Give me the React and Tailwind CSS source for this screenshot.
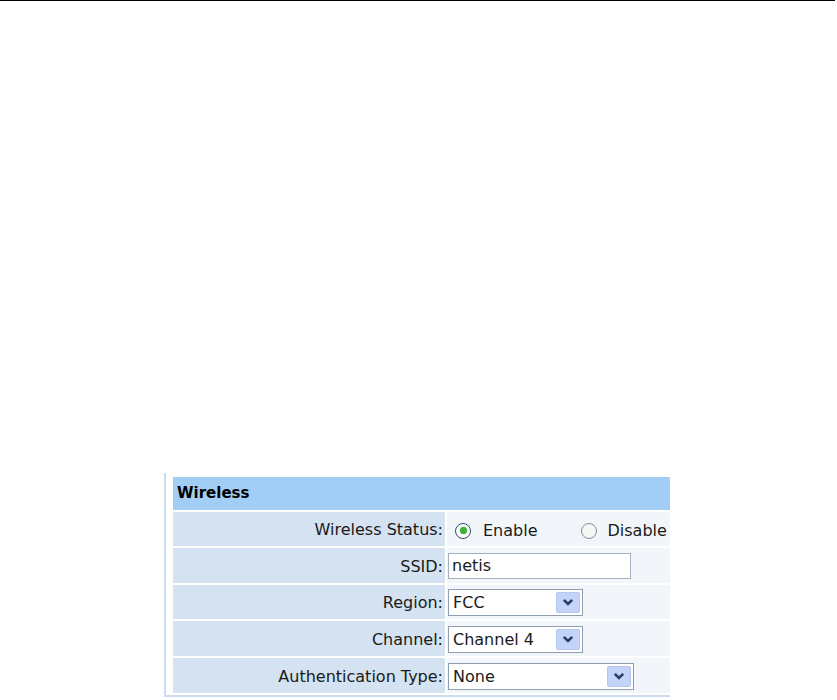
import React from "react";

function Radio({ checked }) {
  return (
    <span
      className={
        "relative inline-flex items-center justify-center w-[16px] h-[16px] rounded-full border " +
        (checked ? "border-[#2f4a68] bg-white" : "border-[#7f8f9f] bg-[#f6f6f2]")
      }
    >
      {checked ? <span className="w-[7px] h-[7px] rounded-full bg-[#3fae3a] shadow-[0_0_2px_#8fd68a]" /> : null}
    </span>
  );
}

function Chevron() {
  return (
    <svg width="12" height="9" viewBox="0 0 12 9">
      <path d="M1.8 1.8 L6 6 L10.2 1.8" fill="none" stroke="#283c6a" strokeWidth="2.6" />
    </svg>
  );
}

function Select({ value, w }) {
  return (
    <div className={"flex items-center h-[27px] border border-[#8f9fae] bg-white pl-[4px] pr-[2px] " + w}>
      <span className="flex-1 pt-[1px]">{value}</span>
      <span className="flex items-center justify-center w-[24px] h-[21px] rounded-[2px] bg-[#c3d4f8] border border-[#b3c6ee]">
        <Chevron />
      </span>
    </div>
  );
}

function Row({ label, h, children }) {
  return (
    <>
      <div className={"bg-[#d4e2f1] flex items-center justify-end pr-[2px] pt-[2px] " + h}>{label}</div>
      <div className={"bg-[#f2f5f9] flex items-center pt-[1px] " + h}>{children}</div>
    </>
  );
}

export default function App() {
  return (
    <div
      className="w-[837px] h-[700px] bg-white overflow-hidden text-[16px] text-[#1a1a1a]"
      style={{ fontFamily: '"DejaVu Sans", Verdana, sans-serif' }}
    >
      <div className="h-px w-[835px] bg-black" />
      <div className="ml-[164px] mt-[472px] w-[506px] border-l-2 border-b-2 border-[#cddcee] pl-[7px] pt-[4px] pb-[2px]">
        <div className="grid grid-cols-[272px_223px] gap-[2px]">
          <div className="col-span-2 h-[33px] bg-[#a2cdf5] flex items-center pl-[4px] font-bold text-[15px] text-black">
            Wireless
          </div>
          <Row label="Wireless Status:" h="h-[34px]">
            <div className="flex items-center pl-[8px] pt-[2px]">
              <Radio checked />
              <span className="ml-[12px]">Enable</span>
              <span className="ml-[43px] flex items-center">
                <Radio />
              </span>
              <span className="ml-[11px]">Disable</span>
            </div>
          </Row>
          <Row label="SSID:" h="h-[35px]">
            <div className="ml-[1px] flex items-center h-[26px] w-[183px] border border-[#a3b1bf] bg-white pl-[3px]">
              netis
            </div>
          </Row>
          <Row label="Region:" h="h-[34px]">
            <Select value="FCC" w="w-[135px] ml-[1px]" />
          </Row>
          <Row label="Channel:" h="h-[35px]">
            <Select value="Channel 4" w="w-[135px] ml-[1px]" />
          </Row>
          <Row label="Authentication Type:" h="h-[35px]">
            <Select value="None" w="w-[186px] ml-[1px]" />
          </Row>
        </div>
      </div>
    </div>
  );
}
